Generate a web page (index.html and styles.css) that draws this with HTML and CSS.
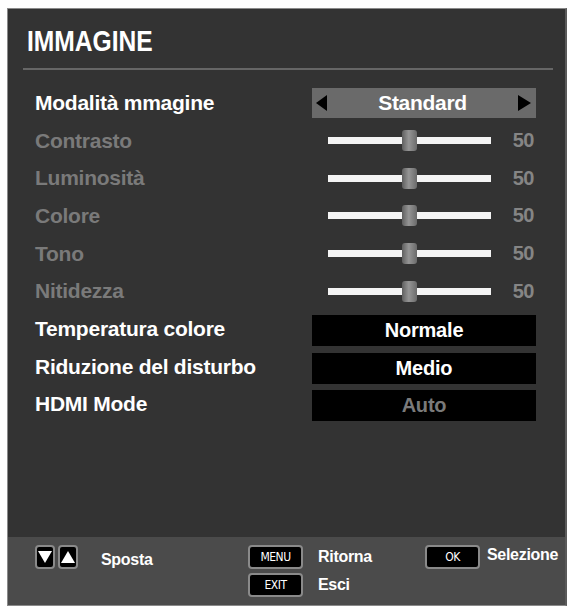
FILE: index.html
```html
<!DOCTYPE html>
<html lang="it">
<head>
<meta charset="utf-8">
<title>Immagine</title>
<link rel="stylesheet" href="styles.css">
</head>
<body>
<div class="panel">
  <div class="header">
    <h1 class="title">IMMAGINE</h1>
    <div class="sep"></div>
  </div>
  <div class="menu">
    <div class="row">
      <div class="label">Modalità mmagine</div>
      <div class="selector">
        <span class="arr arr-left"></span>
        <span class="sel-text">Standard</span>
        <span class="arr arr-right"></span>
      </div>
    </div>
    <div class="row dim">
      <div class="label">Contrasto</div>
      <div class="slider"><div class="track"><span class="knob"></span></div><span class="val">50</span></div>
    </div>
    <div class="row dim">
      <div class="label">Luminosità</div>
      <div class="slider"><div class="track"><span class="knob"></span></div><span class="val">50</span></div>
    </div>
    <div class="row dim">
      <div class="label">Colore</div>
      <div class="slider"><div class="track"><span class="knob"></span></div><span class="val">50</span></div>
    </div>
    <div class="row dim">
      <div class="label">Tono</div>
      <div class="slider"><div class="track"><span class="knob"></span></div><span class="val">50</span></div>
    </div>
    <div class="row dim">
      <div class="label">Nitidezza</div>
      <div class="slider"><div class="track"><span class="knob"></span></div><span class="val">50</span></div>
    </div>
    <div class="row">
      <div class="label">Temperatura colore</div>
      <div class="box">Normale</div>
    </div>
    <div class="row">
      <div class="label">Riduzione del disturbo</div>
      <div class="box">Medio</div>
    </div>
    <div class="row">
      <div class="label">HDMI Mode</div>
      <div class="box box-dim">Auto</div>
    </div>
  </div>
  <div class="footer">
    <div class="fgroup g1">
      <span class="key key-sq"><span class="tri tri-down"></span></span>
      <span class="key key-sq"><span class="tri tri-up"></span></span>
      <span class="ftext ft-sposta">Sposta</span>
    </div>
    <div class="fgroup g2">
      <div class="frow"><span class="key key-wide">MENU</span><span class="ftext">Ritorna</span></div>
      <div class="frow"><span class="key key-wide">EXIT</span><span class="ftext">Esci</span></div>
    </div>
    <div class="fgroup g3">
      <span class="key key-wide">OK</span><span class="ftext ft-sel">Selezione</span>
    </div>
  </div>
</div>
</body>
</html>
```
FILE: styles.css
```css
* { box-sizing: border-box; }
html, body { margin: 0; padding: 0; background: #ffffff; }
body { font-family: "Liberation Sans", Arial, sans-serif; }

.panel {
  margin: 8px 0 0 7px;
  width: 560px;
  height: 598px;
  background: #333333;
  border: 1px solid #8a8a8a;
  border-right: 2px solid #5a5a5a;
  display: flex;
  flex-direction: column;
}

.header { padding: 15px 12px 0 15px; }
.title {
  display: inline-block;
  margin: 0 0 0 4px;
  font-size: 30px;
  line-height: 34px;
  font-weight: bold;
  color: #ffffff;
  transform: scaleX(0.82);
  transform-origin: left center;
}
.sep {
  margin-top: 10px;
  height: 2px;
  background: #666666;
}

.menu {
  flex: 1;
  padding: 14px 0 0 27px;
}
.row {
  height: 37.7px;
  display: flex;
  align-items: center;
  justify-content: space-between;
  padding-right: 29px;
}
.label {
  font-size: 21px;
  font-weight: bold;
  color: #ffffff;
  letter-spacing: -0.25px;
}
.dim .label { color: #7a7a7a; }

.selector {
  width: 224px;
  height: 30px;
  background: #6a6a6a;
  display: flex;
  align-items: center;
  justify-content: space-between;
  padding: 0 5px 0 4px;
}
.sel-text {
  font-size: 21px;
  font-weight: bold;
  color: #ffffff;
  letter-spacing: -0.3px;
}
.arr { width: 0; height: 0; border-top: 8px solid transparent; border-bottom: 8px solid transparent; }
.arr-left { border-right: 11px solid #000000; }
.arr-right { border-left: 13px solid #000000; }

.slider {
  width: 224px;
  display: flex;
  align-items: center;
  justify-content: space-between;
  padding-left: 16px;
}
.track {
  position: relative;
  width: 163px;
  height: 7px;
  background: #f4f4f4;
}
.knob {
  position: absolute;
  left: 74px;
  top: -7px;
  width: 15px;
  height: 21px;
  border-radius: 3px;
  background: linear-gradient(to right, #5f5f5f, #959595 45%, #6a6a6a);
}
.val {
  font-size: 20px;
  font-weight: bold;
  color: #858585;
  letter-spacing: -0.5px;
  margin-right: 2px;
}

.box {
  width: 224px;
  height: 31px;
  background: #000000;
  color: #ffffff;
  font-size: 20px;
  font-weight: bold;
  display: flex;
  align-items: center;
  justify-content: center;
  letter-spacing: -0.2px;
  margin-top: 3px;
}
.box-dim { color: #7a7a7a; }

.footer {
  height: 68px;
  background: #4b4b4b;
  display: flex;
  padding: 8px 0 0 27px;
}
.fgroup { display: flex; }
.g1 { width: 213px; align-items: flex-start; }
.g2 { width: 177px; flex-direction: column; gap: 4px; }
.g3 { align-items: flex-start; }
.frow { display: flex; align-items: center; }

.key {
  display: flex;
  align-items: center;
  justify-content: center;
  background: #000000;
  border: 2px solid #8a8a8a;
  border-radius: 4px;
  height: 24px;
  color: #ffffff;
}
.key-sq { width: 20px; margin-right: 3px; }
.key-wide {
  width: 55px;
  font-family: "DejaVu Sans Condensed", sans-serif;
  font-size: 12px;
  letter-spacing: -0.5px;
}
.tri { width: 0; height: 0; border-left: 7px solid transparent; border-right: 7px solid transparent; }
.tri-down { border-top: 12px solid #ffffff; }
.tri-up { border-bottom: 12px solid #ffffff; }

.ftext {
  font-size: 16px;
  font-weight: bold;
  color: #ffffff;
  margin-left: 15px;
  letter-spacing: -0.3px;
}
.ft-sposta { margin-left: 20px; line-height: 30px; }
.ft-sel { margin-left: 7px; line-height: 20px; }
```
